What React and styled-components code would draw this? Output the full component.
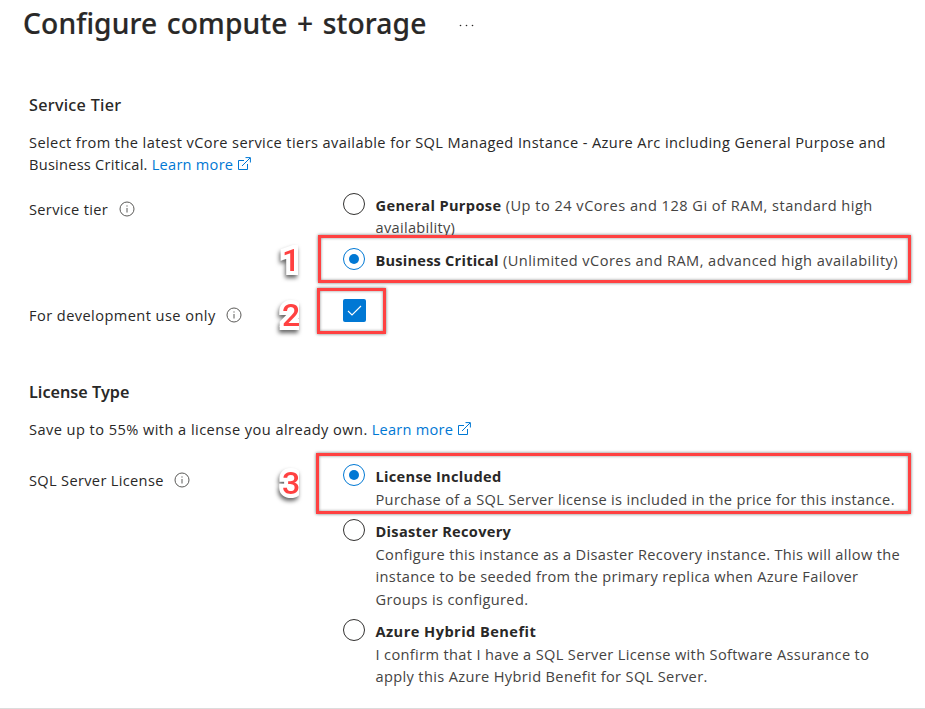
import React from 'react';
import styled, { createGlobalStyle } from 'styled-components';

const Global = createGlobalStyle`
  * { box-sizing: border-box; }
  body { margin: 0; background: #fff; overflow: hidden; }
`;

const Page = styled.main`
  position: relative;
  width: 925px;
  height: 709px;
  padding-left: 29px;
  border-bottom: 1px solid #dcdcdc;
  background: #fff;
  color: #292827;
  font: 400 14.6px/22px 'Open Sans', 'Noto Sans', sans-serif;
`;

const Header = styled.header`
  display: flex;
  align-items: flex-start;
  height: 94px;
  margin-left: -6px;
`;

const Title = styled.h1`
  margin: 3px 0 0;
  width: 436px;
  font-family: 'Noto Sans', sans-serif;
  font-size: 28.2px;
  line-height: 40px;
  font-weight: 500;
  letter-spacing: 0.13px;
  word-spacing: 2px;
  white-space: nowrap;
  -webkit-text-stroke: 0.2px #292827;
`;

const Dots = styled.svg`
  width: 16px;
  height: 4px;
  margin-top: 23px;
  fill: #292827;
`;

const Section = styled.section`
  height: ${(p) => p.$height}px;
`;

const Heading = styled.h2`
  margin: 0 0 15px;
  font-family: 'Noto Sans', sans-serif;
  font-size: 16.2px;
  line-height: 22px;
  font-weight: ${(p) => p.$weight};
  letter-spacing: ${(p) => p.$track}px;
`;

const Intro = styled.p`
  margin: 0;
  white-space: nowrap;
`;

const Text = styled.span`
  letter-spacing: ${(p) => p.$track}px;
  white-space: nowrap;
`;

const Link = styled.a`
  margin-left: 4px;
  color: #0078d4;
  letter-spacing: 0.25px;
  text-decoration: none;
`;

const ExternalSvg = styled.svg`
  width: 14px;
  height: 14px;
  margin-left: 4px;
  vertical-align: -1px;
  fill: none;
  stroke: #0078d4;
`;

const Field = styled.div`
  display: grid;
  grid-template-columns: 314px 1fr;
  align-items: start;
  margin-top: ${(p) => p.$gap}px;
`;

const Label = styled.div`
  display: flex;
  align-items: center;
  gap: 10.5px;
  margin-top: ${(p) => p.$offset}px;
`;

const InfoSvg = styled.svg`
  width: 16px;
  height: 16px;
  fill: none;
  stroke: #5b5a58;
`;

const Option = styled.label`
  display: flex;
  gap: 10.5px;
  height: ${(p) => p.$height}px;
`;

const Radio = styled.span`
  display: grid;
  place-items: center;
  flex: none;
  width: 22px;
  height: 22px;
  border: 1px solid ${(p) => (p.$on ? '#0078d4' : '#323130')};
  border-radius: 50%;
  &::after {
    content: '';
    width: 10px;
    height: 10px;
    border-radius: 50%;
    background: ${(p) => (p.$on ? '#0078d4' : 'transparent')};
  }
`;

const OptionBody = styled.div`
  padding-top: 1px;
  color: #444342;
`;

const Name = styled.strong`
  color: #292827;
  font-weight: 700;
  letter-spacing: ${(p) => p.$track}px;
`;

const Detail = styled.div`
  margin-top: 1px;
  line-height: 22.4px;
`;

const Line = styled.div`
  letter-spacing: ${(p) => p.$track}px;
  white-space: nowrap;
`;

const Check = styled.span`
  display: grid;
  place-items: center;
  width: 23px;
  height: 23px;
  border-radius: 2px;
  background: #0078d4;
`;

const Frame = styled.div`
  position: absolute;
  left: ${(p) => p.$x}px;
  top: ${(p) => p.$y}px;
  width: ${(p) => p.$w}px;
  height: ${(p) => p.$h}px;
  border: 3px solid #ff4141;
  box-shadow: 0 0 3px rgba(0, 0, 0, 0.55), inset 0 0 3px rgba(0, 0, 0, 0.45);
`;

const Step = styled.div`
  position: absolute;
  left: 275px;
  top: ${(p) => p.$y}px;
  width: 24px;
  height: 44px;
  padding-left: 7px;
  overflow: hidden;
  color: #ff4141;
  font: 500 32px/40px Roboto, 'Liberation Sans', sans-serif;
  -webkit-text-stroke: 8px #fff;
  paint-order: stroke fill;
  filter: drop-shadow(-1px 3px 2px rgba(0, 0, 0, 0.6));
`;

const Info = () => (
  <InfoSvg viewBox="0 0 16 16">
    <circle cx="8" cy="8" r="7" />
    <path d="M8 7v4.5M8 4.4v1.2" />
  </InfoSvg>
);

const External = () => (
  <ExternalSvg viewBox="0 0 14 14">
    <path d="M7 3.5H1.5v9h9V7M5 9l8-8M8.5.6h4.9v4.9" />
  </ExternalSvg>
);

export default function App() {
  return (
    <Page>
      <Global />
      <Header>
        <Title>Configure compute + storage</Title>
        <Dots viewBox="0 0 16 4">
          <circle cx="1.5" cy="2.5" r="0.8" />
          <circle cx="7.5" cy="2.5" r="0.8" />
          <circle cx="13.5" cy="2.5" r="0.8" />
        </Dots>
      </Header>

      <Section $height={287}>
        <Heading $weight={500} $track={0.28}>Service Tier</Heading>
        <Intro>
          <Text $track={0.4}>
            Select from the latest vCore service tiers available for SQL Managed Instance - Azure Arc including General Purpose and
          </Text>
          <br />
          <Text $track={0.25}>Business Critical.</Text>
          <Link>Learn more</Link>
          <External />
        </Intro>
        <Field $gap={18}>
          <Label $offset={5}>
            <Text $track={0.33}>Service tier</Text>
            <Info />
          </Label>
          <div>
            <Option $height={55}>
              <Radio />
              <OptionBody>
                <Line $track={0.48}>
                  <Name $track={0.35}>General Purpose</Name> (Up to 24 vCores and 128 Gi of RAM, standard high
                </Line>
                <Line $track={0.3}>availability)</Line>
              </OptionBody>
            </Option>
            <Option $height={51}>
              <Radio $on />
              <OptionBody>
                <Line $track={0.43}>
                  <Name $track={0.22}>Business Critical</Name> (Unlimited vCores and RAM, advanced high availability)
                </Line>
              </OptionBody>
            </Option>
          </div>
        </Field>
        <Field $gap={0}>
          <Label $offset={5}>
            <Text $track={0.43}>For development use only</Text>
            <Info />
          </Label>
          <Check>
            <svg width="15" height="12" viewBox="0 0 15 12" fill="none" stroke="#fff" strokeWidth="1.1">
              <path d="M1 6l4 4L14 1" />
            </svg>
          </Check>
        </Field>
      </Section>

      <Section $height={320}>
        <Heading $weight={600} $track={0}>License Type</Heading>
        <Intro>
          <Text $track={0.44}>Save up to 55% with a license you already own.</Text>
          <Link>Learn more</Link>
          <External />
        </Intro>
        <Field $gap={24}>
          <Label $offset={5}>
            <Text $track={0.33}>SQL Server License</Text>
            <Info />
          </Label>
          <div>
            <Option $height={55}>
              <Radio $on />
              <OptionBody>
                <Name $track={0.3}>License Included</Name>
                <Detail>
                  <Line $track={0.33}>Purchase of a SQL Server license is included in the price for this instance.</Line>
                </Detail>
              </OptionBody>
            </Option>
            <Option $height={100}>
              <Radio />
              <OptionBody>
                <Name $track={0.3}>Disaster Recovery</Name>
                <Detail>
                  <Line $track={0.33}>Configure this instance as a Disaster Recovery instance. This will allow the</Line>
                  <Line $track={0.35}>instance to be seeded from the primary replica when Azure Failover</Line>
                  <Line $track={0.35}>Groups is configured.</Line>
                </Detail>
              </OptionBody>
            </Option>
            <Option $height={80}>
              <Radio />
              <OptionBody>
                <Name $track={0.45}>Azure Hybrid Benefit</Name>
                <Detail>
                  <Line $track={0.35}>I confirm that I have a SQL Server License with Software Assurance to</Line>
                  <Line $track={0.35}>apply this Azure Hybrid Benefit for SQL Server.</Line>
                </Detail>
              </OptionBody>
            </Option>
          </div>
        </Field>
      </Section>

      <Frame $x={318} $y={235} $w={593} $h={48} />
      <Frame $x={317} $y={288} $w={69} $h={46} />
      <Frame $x={316} $y={453} $w={595} $h={61} />
      <Step $y={240}>1</Step>
      <Step $y={295}>2</Step>
      <Step $y={463}>3</Step>
    </Page>
  );
}
